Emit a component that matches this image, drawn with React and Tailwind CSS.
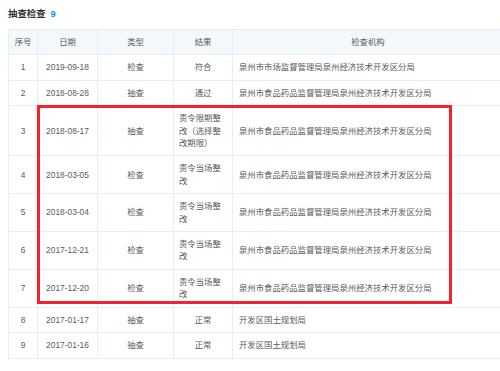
import React from 'react';

const FONT = '"Liberation Sans", "Noto Sans CJK SC", sans-serif';

const rows = [
  { no: 1, date: '2019-09-18', type: '检查', result: '符合', org: '泉州市市场监督管理局泉州经济技术开发区分局' },
  { no: 2, date: '2018-08-28', type: '抽查', result: '通过', org: '泉州市食品药品监督管理局泉州经济技术开发区分局' },
  { no: 3, date: '2018-08-17', type: '抽查', result: '责令限期整改（选择整改期限）', org: '泉州市食品药品监督管理局泉州经济技术开发区分局' },
  { no: 4, date: '2018-03-05', type: '检查', result: '责令当场整改', org: '泉州市食品药品监督管理局泉州经济技术开发区分局' },
  { no: 5, date: '2018-03-04', type: '检查', result: '责令当场整改', org: '泉州市食品药品监督管理局泉州经济技术开发区分局' },
  { no: 6, date: '2017-12-21', type: '检查', result: '责令当场整改', org: '泉州市食品药品监督管理局泉州经济技术开发区分局' },
  { no: 7, date: '2017-12-20', type: '检查', result: '责令当场整改', org: '泉州市食品药品监督管理局泉州经济技术开发区分局' },
  { no: 8, date: '2017-01-17', type: '抽查', result: '正常', org: '开发区国土规划局' },
  { no: 9, date: '2017-01-16', type: '抽查', result: '正常', org: '开发区国土规划局' },
];

const cell = 'border border-[#e6eef6] py-[6px] px-[5px] leading-[12.4px] align-middle';

const App = () => {
  return (
    <div
      className="relative w-[500px] h-[371px] overflow-hidden bg-white text-[8.4px] text-[#5a5a5a] [text-spacing-trim:space-all]"
      style={{ fontFamily: FONT }}
    >
      {/* Section title */}
      <div className="flex items-center h-[29px] pl-[8px] pb-[1px]">
        <span className="text-[9.4px] font-semibold text-[#333]">抽查检查</span>
        <span className="ml-[5px] text-[9.4px] font-bold text-[#128bed]">9</span>
      </div>

      <table className="ml-[8px] w-[496px] border-collapse table-fixed">
        <colgroup>
          <col className="w-[29px]" />
          <col className="w-[60px]" />
          <col className="w-[76px]" />
          <col className="w-[59px]" />
          <col />
        </colgroup>
        <thead>
          <tr className="bg-[#f3f8fd]">
            <th className={`${cell} font-normal text-center`}>序号</th>
            <th className={`${cell} font-normal text-center`}>日期</th>
            <th className={`${cell} font-normal text-center`}>类型</th>
            <th className={`${cell} font-normal text-center`}>结果</th>
            <th className={`${cell} font-normal text-center`}>检查机构</th>
          </tr>
        </thead>
        <tbody>
          {rows.map((r) => (
            <tr key={r.no}>
              <td className={`${cell} text-center`}>{r.no}</td>
              <td className={`${cell} text-center`}>{r.date}</td>
              <td className={`${cell} text-center`}>{r.type}</td>
              <td className={`${cell} text-center`}>
                <span className="inline-block text-left">{r.result}</span>
              </td>
              <td className={`${cell} pl-[6px] text-left`}>{r.org}</td>
            </tr>
          ))}
        </tbody>
      </table>

      {/* Red annotation box */}
      <div className="absolute left-[37px] top-[105px] w-[415px] h-[199px] border-[3px] border-[#f5222d] pointer-events-none" />
    </div>
  );
};

export default App;
